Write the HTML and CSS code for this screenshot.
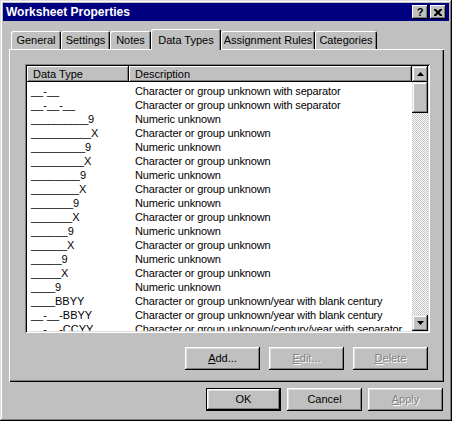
FILE: index.html
```html
<!DOCTYPE html>
<html>
	<head>
		<link rel="stylesheet" href="styles.css">
	</head>
	<body>
		<div class="window">
			<div class="titlebar">
				<span class="title">Worksheet Properties</span>
				<span class="caption-btn help">?</span>
				<span class="caption-btn">
					<svg width="8" height="7" viewBox="0 0 8 7"><path d="M0 0h2l2 2 2-2h2v1l-2.5 2.5 2.5 2.5v1h-2l-2-2-2 2h-2v-1l2.5-2.5-2.5-2.5z" fill="#000"/></svg>
				</span>
			</div>

			<div class="content">
				<div class="tabs">
					<div class="tab w-general">General</div>
					<div class="tab w-settings">Settings</div>
					<div class="tab w-notes">Notes</div>
					<div class="tab w-types selected">Data Types</div>
					<div class="tab w-rules">Assignment Rules</div>
					<div class="tab w-cats">Categories</div>
				</div>

				<div class="panel">
					<div class="list">
						<div class="list-body">
							<div class="header">
								<div class="hcell col-type">Data Type</div>
								<div class="hcell col-desc">Description</div>
							</div>
							<div class="rows">
								<div class="row"><span class="col-type">__-__</span><span class="col-desc">Character or group unknown with separator</span></div>
								<div class="row"><span class="col-type">__-__-__</span><span class="col-desc">Character or group unknown with separator</span></div>
								<div class="row"><span class="col-type"><span class="fill tight-2">__________</span>9</span><span class="col-desc">Numeric unknown</span></div>
								<div class="row"><span class="col-type"><span class="fill tight-1">__________</span>X</span><span class="col-desc">Character or group unknown</span></div>
								<div class="row"><span class="col-type"><span class="fill tight-1">_________</span>9</span><span class="col-desc">Numeric unknown</span></div>
								<div class="row"><span class="col-type"><span class="fill tight-0">_________</span>X</span><span class="col-desc">Character or group unknown</span></div>
								<div class="row"><span class="col-type"><span class="fill">________</span>9</span><span class="col-desc">Numeric unknown</span></div>
								<div class="row"><span class="col-type"><span class="fill tight-1">________</span>X</span><span class="col-desc">Character or group unknown</span></div>
								<div class="row"><span class="col-type"><span class="fill tight-1">_______</span>9</span><span class="col-desc">Numeric unknown</span></div>
								<div class="row"><span class="col-type"><span class="fill tight-0">_______</span>X</span><span class="col-desc">Character or group unknown</span></div>
								<div class="row"><span class="col-type"><span class="fill">______</span>9</span><span class="col-desc">Numeric unknown</span></div>
								<div class="row"><span class="col-type"><span class="fill tight-1">______</span>X</span><span class="col-desc">Character or group unknown</span></div>
								<div class="row"><span class="col-type"><span class="fill">_____</span>9</span><span class="col-desc">Numeric unknown</span></div>
								<div class="row"><span class="col-type"><span class="fill tight-1">_____</span>X</span><span class="col-desc">Character or group unknown</span></div>
								<div class="row"><span class="col-type"><span class="fill tight-1">____</span>9</span><span class="col-desc">Numeric unknown</span></div>
								<div class="row"><span class="col-type"><span class="fill tight-1">____</span>BBYY</span><span class="col-desc">Character or group unknown/year with blank century</span></div>
								<div class="row"><span class="col-type">__-__-BBYY</span><span class="col-desc">Character or group unknown/year with blank century</span></div>
								<div class="row"><span class="col-type">__-__-CCYY</span><span class="col-desc">Character or group unknown/century/year with separator</span></div>
							</div>
						</div>
						<div class="scrollbar">
							<div class="sb-btn"><svg width="7" height="4" viewBox="0 0 7 4"><path d="M3.5 0L7 4H0z" fill="#000"/></svg></div>
							<div class="thumb"></div>
							<div class="track"></div>
							<div class="sb-btn"><svg width="7" height="4" viewBox="0 0 7 4"><path d="M0 0h7L3.5 4z" fill="#000"/></svg></div>
						</div>
					</div>

					<div class="panel-buttons">
						<div class="btn"><u>A</u>dd...</div>
						<div class="btn disabled"><u>E</u>dit...</div>
						<div class="btn disabled"><u>D</u>elete</div>
					</div>
				</div>

				<div class="dialog-buttons">
					<div class="btn default">OK</div>
					<div class="btn">Cancel</div>
					<div class="btn disabled"><u>A</u>pply</div>
				</div>
			</div>
		</div>
	</body>
</html>
```

FILE: styles.css
```css
html, body {
	margin: 0;
	padding: 0;
	background: #c0c0c0;
}

body {
	font-family: "Liberation Sans", Arial, sans-serif;
	font-size: 11px;
	color: #000;
}

/* Window frame */
.window {
	box-sizing: border-box;
	width: 452px;
	height: 421px;
	padding: 3px;
	background: #c0c0c0;
	box-shadow: inset -1px -1px #000, inset 1px 1px #dfdfdf,
	            inset -2px -2px #808080, inset 2px 2px #fff;
}

.titlebar {
	height: 18px;
	background: #000080;
	color: #fff;
	display: flex;
	align-items: center;
	padding: 0 3px 0 3px;
}
.title {
	flex: 1;
	font-weight: bold;
	font-size: 12px;
}
.caption-btn {
	box-sizing: border-box;
	width: 16px;
	height: 14px;
	margin-left: 2px;
	background: #c0c0c0;
	color: #000;
	display: flex;
	align-items: center;
	justify-content: center;
	box-shadow: inset -1px -1px #000, inset 1px 1px #fff, inset -2px -2px #808080;
}
.caption-btn.help {
	font-weight: bold;
	font-size: 11px;
	line-height: 14px;
}

.content {
	padding: 8px 5px 0 6px;
}

/* Tabs */
.tabs {
	display: flex;
	align-items: flex-end;
	height: 20px;
	padding-left: 2px;
	position: relative;
	z-index: 1;
}
.tab {
	box-sizing: border-box;
	height: 18px;
	line-height: 18px;
	text-align: center;
	background: #c0c0c0;
	border-radius: 2px 2px 0 0;
	box-shadow: inset 1px 1px #fff, inset -1px 0 #000, inset -2px 0 #808080;
	white-space: nowrap;
}
.tab.selected {
	height: 21px;
	padding-top: 2px;
	margin-bottom: -1px;
}
.w-general  { width: 50px; }
.w-settings { width: 49px; }
.w-notes    { width: 41px; }
.w-types    { width: 70px; }
.w-rules    { width: 94px; }
.w-cats     { width: 62px; }

.panel {
	box-sizing: border-box;
	height: 333px;
	padding: 15px 14px 0 16px;
	box-shadow: inset 1px 1px #fff, inset -1px -1px #000, inset -2px -2px #808080;
}

/* List view */
.list {
	box-sizing: border-box;
	height: 269px;
	padding: 2px;
	background: #fff;
	display: flex;
	box-shadow: inset 1px 1px #808080, inset -1px -1px #fff,
	            inset 2px 2px #000, inset -2px -2px #dfdfdf;
}
.list-body {
	flex: 1;
	overflow: hidden;
}
.header {
	display: flex;
	height: 16px;
}
.hcell {
	box-sizing: border-box;
	height: 16px;
	line-height: 16px;
	padding-left: 6px;
	background: #c0c0c0;
	box-shadow: inset -1px -1px #000, inset 1px 1px #fff, inset -2px -2px #808080;
}
.hcell.col-type { width: 102px; }
.hcell.col-desc { flex: 1; }

.rows {
	padding-top: 2px;
}
.row {
	display: flex;
	height: 14px;
	line-height: 14px;
	white-space: nowrap;
}
.row .col-type {
	box-sizing: border-box;
	width: 102px;
	padding-left: 4px;
}
.row .col-desc {
	padding-left: 6px;
	letter-spacing: -0.15px;
}

/* underscore runs squeezed to the widths the old list shows */
.fill         { letter-spacing: 0; }
.fill.tight-0 { letter-spacing: -0.23px; }
.fill.tight-1 { letter-spacing: -0.12px; }
.fill.tight-2 { letter-spacing: -0.42px; }

/* Scrollbar */
.scrollbar {
	width: 16px;
	display: flex;
	flex-direction: column;
	background: repeating-conic-gradient(#fff 0 25%, #c0c0c0 0 50%) 0 0 / 2px 2px;
}
.sb-btn, .thumb {
	box-sizing: border-box;
	background: #c0c0c0;
	box-shadow: inset -1px -1px #000, inset 1px 1px #dfdfdf,
	            inset -2px -2px #808080, inset 2px 2px #fff;
}
.sb-btn {
	height: 16px;
	display: flex;
	align-items: center;
	justify-content: center;
}
.thumb { height: 31px; }
.track { flex: 1; }

/* Buttons */
.panel-buttons {
	display: flex;
	justify-content: flex-end;
	gap: 9px;
	margin-top: 14px;
	padding-right: 2px;
}
.dialog-buttons {
	display: flex;
	justify-content: flex-end;
	gap: 6px;
	margin-top: 6px;
	padding-right: 1px;
}
.btn {
	box-sizing: border-box;
	width: 75px;
	height: 23px;
	line-height: 23px;
	text-align: center;
	background: #c0c0c0;
	box-shadow: inset -1px -1px #000, inset 1px 1px #fff,
	            inset -2px -2px #808080, inset 2px 2px #dfdfdf;
}
.btn.default {
	border: 1px solid #000;
	line-height: 21px;
}
.btn.disabled {
	color: #808080;
	text-shadow: 1px 1px #fff;
}
```
